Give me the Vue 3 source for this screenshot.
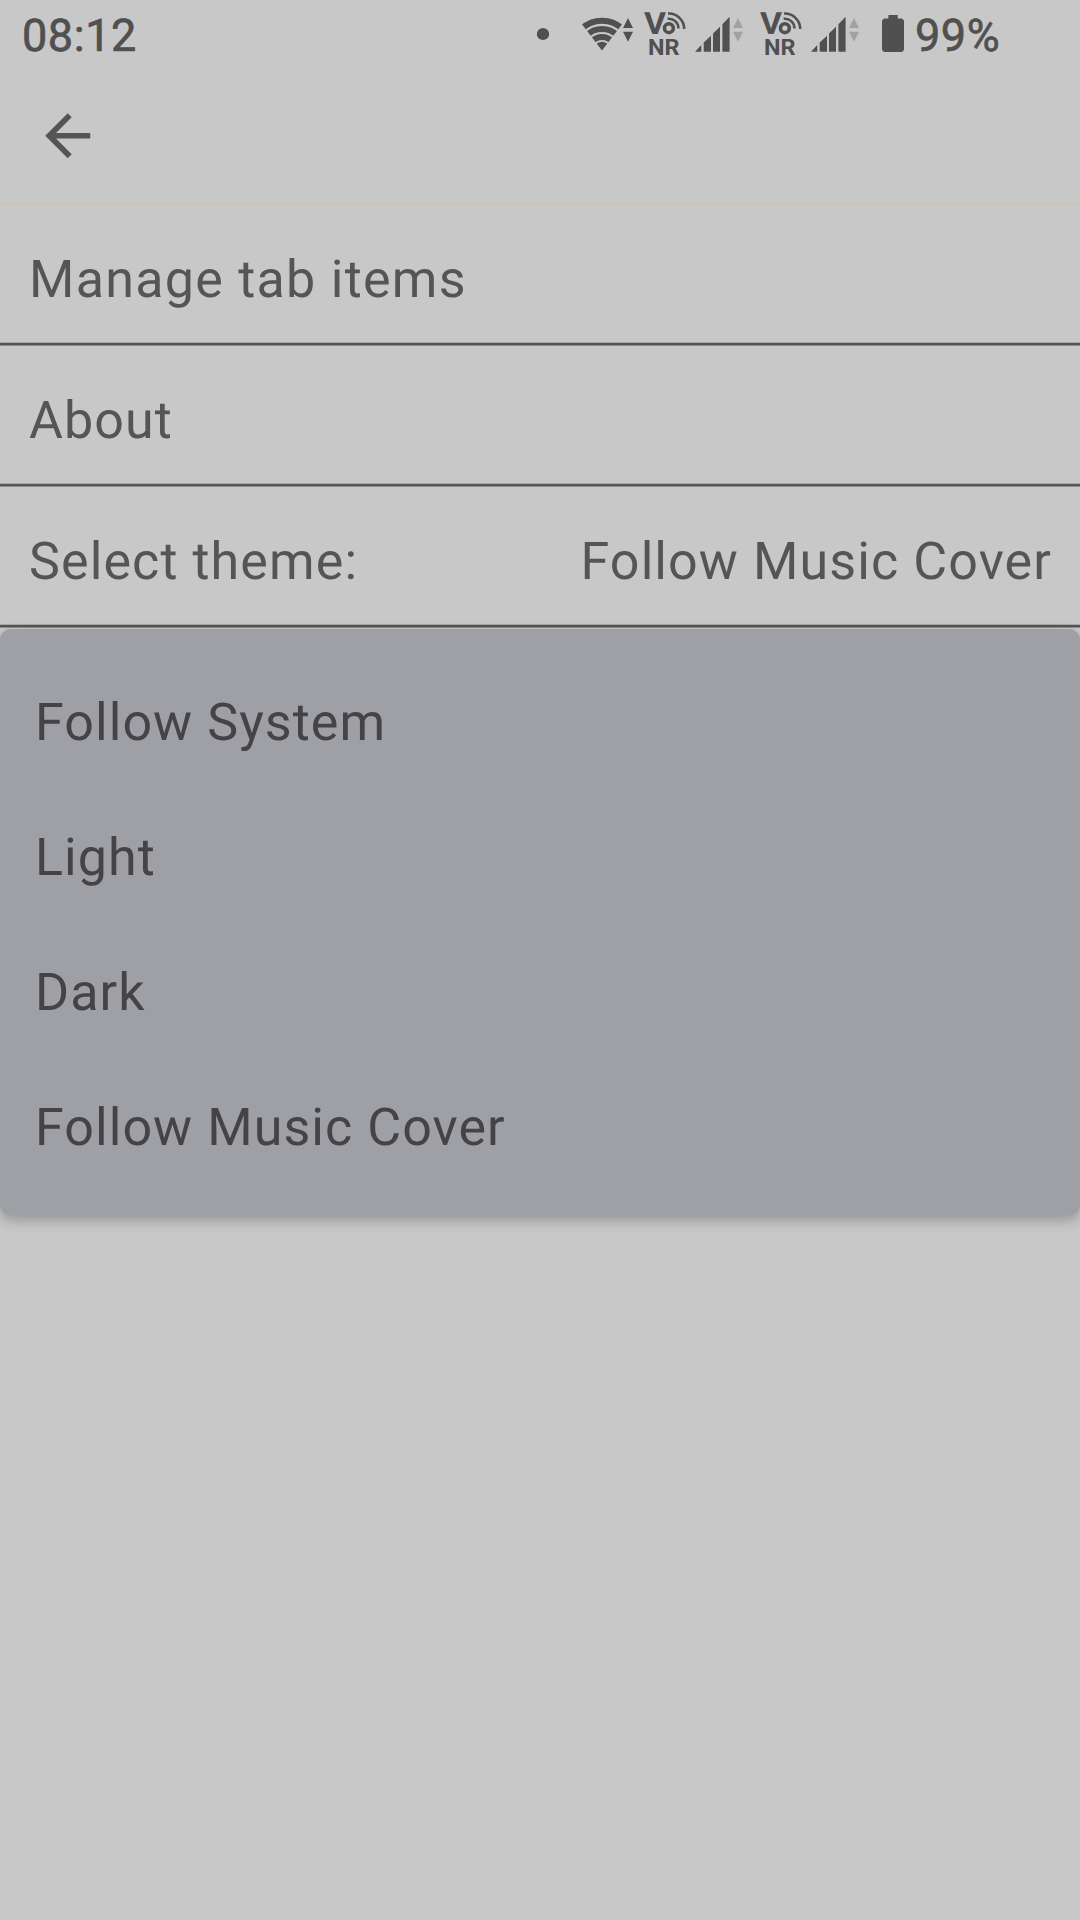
<script setup>
const settings = [
  { label: 'Manage tab items' },
  { label: 'About' },
  { label: 'Select theme:', value: 'Follow Music Cover' },
]
const themes = ['Follow System', 'Light', 'Dark', 'Follow Music Cover']
const sims = [1, 2]
</script>

<template>
  <div class="screen">
    <header class="status">
      <span class="clock">08:12</span>
      <div class="indicators">
        <svg class="dot" width="12" height="68" viewBox="0 0 12 68"><circle cx="6" cy="34" r="6.1" /></svg>
        <svg class="wifi" width="54" height="68" viewBox="0 0 54 68">
          <defs>
            <clipPath id="fan"><path d="M22 50.5 L-1 20.5 V10 H45 V20.5 Z" /></clipPath>
          </defs>
          <g clip-path="url(#fan)">
            <circle class="arc" cx="22" cy="50.5" r="29.8" />
            <circle class="arc" cx="22" cy="50.5" r="21.6" />
            <circle class="arc" cx="22" cy="50.5" r="13.6" />
            <circle cx="22" cy="50.5" r="8.8" />
          </g>
          <path d="M43 28 L48 18 L53 28 Z M43 31.7 H53 L48 41.7 Z" />
        </svg>
        <svg v-for="sim in sims" :key="sim" class="sim" width="106" height="68" viewBox="0 0 106 68">
          <text class="volte" x="4" y="34" textLength="22" lengthAdjust="spacingAndGlyphs">V</text>
          <circle class="ring" cx="28.9" cy="28.2" r="4.4" />
          <path class="wave" d="M27.6 18.7 A9.8 9.8 0 0 1 38.5 28.5 M28 13.6 A15.3 15.3 0 0 1 44.2 29" />
          <text class="nr" x="8" y="54.8" textLength="31.5" lengthAdjust="spacingAndGlyphs">NR</text>
          <path d="M55 51.7 L61.3 45 V51.7 Z M63.7 42.5 L71 35.8 V51.7 H63.7 Z M73 33.5 L80 26.8 V51.7 H73 Z M82.4 24.3 L89.6 16.8 V51.7 H82.4 Z" />
          <path class="idle" d="M93 28 L98 18 L103 28 Z M93 31.7 H103 L98 41.7 Z" />
        </svg>
        <svg class="battery" width="22" height="68" viewBox="0 0 22 68">
          <path d="M6.4 15 H15.7 V18.5 H20 L22 20.5 V50 L20 52 H2 L0 50 V20.5 L2 18.5 H6.4 Z" />
        </svg>
        <span class="percent">99%</span>
      </div>
    </header>

    <nav class="toolbar">
      <svg width="67.5" height="67.5" viewBox="0 0 24 24">
        <path d="M20 11H7.83l5.59-5.59L12 4l-8 8 8 8 1.41-1.41L7.83 13H20v-2z" />
      </svg>
    </nav>

    <main>
      <div v-for="item in settings" :key="item.label" class="row">
        <span>{{ item.label }}</span>
        <span v-if="item.value">{{ item.value }}</span>
      </div>
      <ul class="menu">
        <li v-for="theme in themes" :key="theme">{{ theme }}</li>
      </ul>
    </main>
  </div>
</template>

<style>
body {
  background: #c8c8c8;
}
</style>

<style scoped>
.screen {
  width: 1080px;
  height: 1920px;
  overflow: hidden;
  background: #c8c8c8;
  color: #555;
  font-family: Roboto, sans-serif;
  font-size: 52px;
  text-rendering: geometricPrecision;
}
svg {
  display: block;
  flex: none;
  fill: #505050;
}
.status {
  display: flex;
  justify-content: space-between;
  height: 68px;
  padding: 0 79px 0 22px;
  box-sizing: border-box;
  color: #505050;
  font-size: 45px;
  font-weight: 400;
  line-height: 71px;
  letter-spacing: 0.55px;
  -webkit-text-stroke: 0.7px #505050;
}
.status text {
  letter-spacing: 0;
  -webkit-text-stroke: 0;
}
.indicators {
  display: flex;
}
.wifi {
  margin-left: 31px;
}
.arc {
  fill: none;
  stroke: #505050;
  stroke-width: 6;
}
.sim {
  margin-left: 6px;
}
.sim + .sim {
  margin-left: 10px;
}
.volte {
  font-size: 30.5px;
  font-weight: 700;
}
.nr {
  font-size: 22.5px;
  font-weight: 700;
}
.ring {
  fill: none;
  stroke: #505050;
  stroke-width: 3.6;
}
.wave {
  fill: none;
  stroke: #505050;
  stroke-width: 2.5;
}
.idle {
  fill: #a2a2a2;
}
.battery {
  margin-left: 20px;
}
.percent {
  width: 86px;
  margin-left: 11px;
}
.toolbar {
  display: flex;
  align-items: center;
  height: 138px;
  padding-left: 34px;
  border-bottom: 3px solid #cfc4b9;
  box-sizing: border-box;
}
.toolbar svg {
  fill: #555;
}
.row {
  display: flex;
  justify-content: space-between;
  align-items: center;
  height: 141px;
  padding: 8px 28px 0 29px;
  background: linear-gradient(#a9a9a9 1px, #555 1px 3px, #8c8c8c 3px) bottom / 100% 4px no-repeat;
  box-sizing: border-box;
  letter-spacing: 1.1px;
}
.row:first-child {
  height: 140px;
  padding-top: 7px;
  letter-spacing: 1.27px;
}
.menu {
  margin: 1px 0 0;
  padding: 23px 0;
  border-radius: 11px;
  background: #9fa0a5;
  box-shadow: 0 5px 13px rgba(0, 0, 0, 0.26);
  color: #444446;
  letter-spacing: 1.06px;
  list-style: none;
}
.menu li {
  display: flex;
  align-items: center;
  height: 135px;
  padding: 5px 35px 0;
  box-sizing: border-box;
}
</style>
